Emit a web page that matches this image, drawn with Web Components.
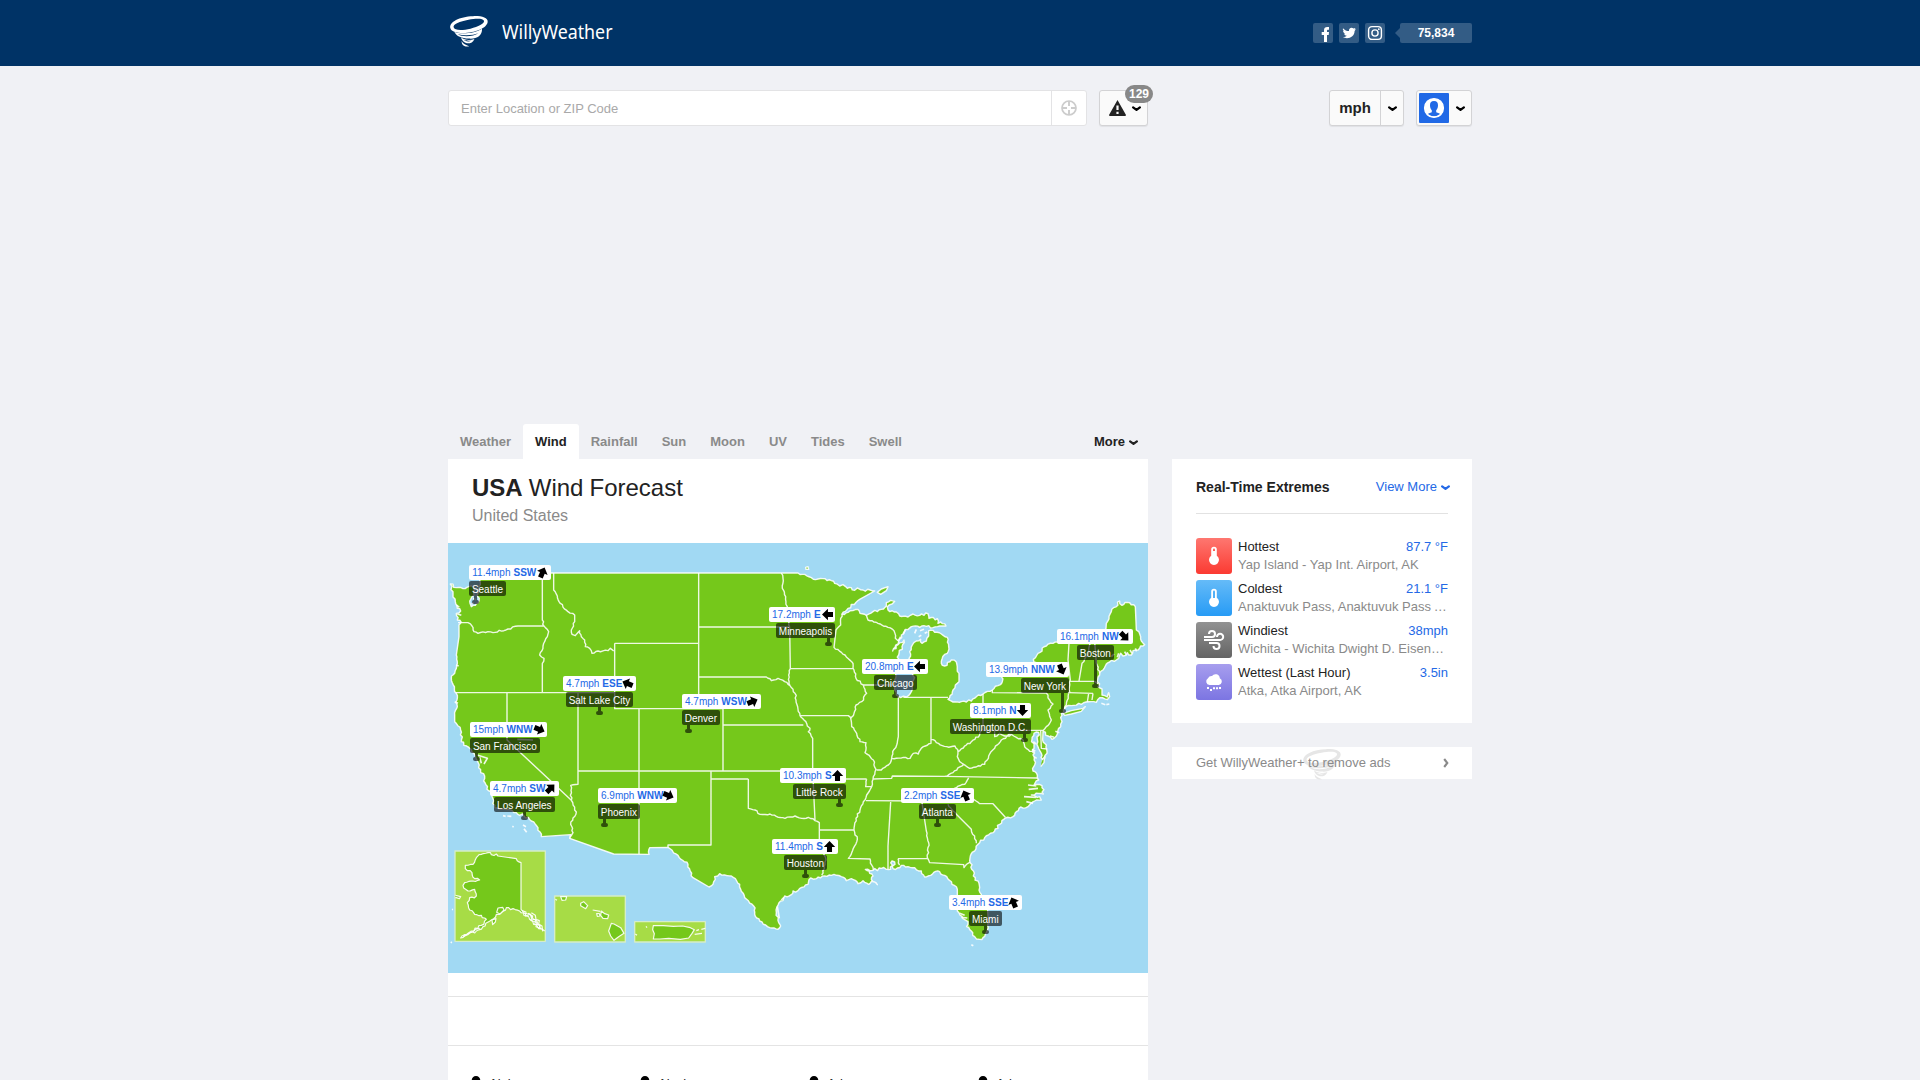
<!DOCTYPE html>
<html lang="en">
<head>
<meta charset="utf-8">
<title>USA Wind Forecast - WillyWeather</title>
<style>
html{height:100%;overflow:hidden}
body{margin:0;height:1080px;overflow:hidden;background:#f0f1f5;font-family:"Liberation Sans",Arial,sans-serif;font-size:13px;color:#222}
</style>
</head>
<body>
<weather-page></weather-page>
<script>
const define = (name, build) => customElements.define(name, class extends HTMLElement {
  connectedCallback() {
    if (this.shadowRoot) return;
    const root = this.attachShadow({ mode: 'open' });
    root.innerHTML = build(this);
  }
});
const at = (el, n) => el.getAttribute(n) || '';

/* ---------- icons ---------- */
const TORNADO = `<path fill-rule="evenodd" d="M1 36C-3 18 28 1 70 0C96-1 115 5 114 17C113 36 75 51 40 51C18 51 3 46 1 36ZM11 34C13 44 38 44 62 38C86 32 104 23 103 15C101 6 78 7 56 11C30 16 8 24 11 34Z"/>
<path d="M13 47C30 56 75 53 97 38C98 60 80 70 57 68C36 67 19 61 13 47ZM23 55C35 63 70 64 86 51C72 58 45 60 23 55Z" fill-rule="evenodd"/>
<path d="M33 64C45 74 62 74 74 69C70 80 60 83 51 82C42 80 36 74 33 64ZM40 71C48 78 58 78 65 74C57 75 48 75 40 71Z" fill-rule="evenodd"/>
<path d="M35 75C40 84 48 87 58 91C47 95 35 89 35 75Z"/>`;
const ICONS = {
  tornado: ['0 0 115 93', TORNADO],
  chevron: ['0 0 9 6', '<path d="M1.1 1.4L4.5 3.9L7.9 1.4" fill="none" stroke="currentColor" stroke-width="2.3" stroke-linecap="round" stroke-linejoin="round"/>'],
  facebook: ['0 0 20 20', '<path d="M11 19V12H8.7V9H11V7.4C11 5 12.3 4 14.2 4H16V6.8H15C14.2 6.8 14 7.2 14 8V9H16L15.7 12H14V19Z"/>'],
  twitter: ['0 0 20 20', '<path d="M4 5.2C5.8 7.2 7.6 8 10 8.1C9.4 5 12.8 3.8 14.5 5.6L16.5 4.9L15.6 6.6L16.9 6.3L15.6 8C15.6 13.8 9 17 3.8 14.1C5.5 14.2 6.8 13.7 7.8 12.8C6.4 12.7 5.5 11.9 5.1 10.8H6.3C4.9 10.3 4.1 9.2 4.1 7.8L5.3 8.2C4 7.3 3.6 6.5 4 5.2Z"/>'],
  instagram: ['0 0 20 20', '<rect x="3.6" y="3.6" width="12.8" height="12.8" rx="3.4" fill="none" stroke="currentColor" stroke-width="1.4"/><circle cx="10" cy="10" r="3.1" fill="none" stroke="currentColor" stroke-width="1.4"/><circle cx="13.8" cy="6.2" r=".9"/>'],
  target: ['0 0 16 16', '<circle cx="8" cy="8" r="7" fill="none" stroke="currentColor" stroke-width="1.7"/><path d="M8 1V6M8 10V15M1 8H6M10 8H15" stroke="currentColor" stroke-width="1.9"/>'],
  alert: ['0 0 17 16', '<path fill-rule="evenodd" d="M8.5 0L17 15Q17 16 16 16H1Q0 16 0 15ZM7.4 5.5V10H9.6V5.5ZM7.4 11.7V13.9H9.6V11.7Z"/>'],
  user: ['0 0 30 30', '<rect width="30" height="30" rx="1" fill="#2169e6"/><circle cx="15" cy="15" r="9.3" fill="none" stroke="#fff" stroke-width="1.6"/><path fill="#fff" fill-rule="evenodd" d="M5.5 15A9.5 9.5 0 0 1 24.5 15A9.5 9.5 0 0 1 5.5 15ZM15 8C12 8 10.8 10 11 12.8C11.1 15.2 12 16.2 12.8 17.3V19.3C11 20 9 20.4 8.6 21.3C12 24 18 24 21.4 21.3C21 20.4 19 20 17.2 19.3V17.3C18 16.2 18.9 15.2 19 12.8C19.2 10 18 8 15 8Z"/>'],
  hot: ['0 0 36 36', '<path d="M15.2 11.6a2.8 2.8 0 0 1 5.6 0V17.8a5 5 0 1 1-5.6 0Z"/><path d="M17 11.6a1 1 0 0 1 2 0V13H17Z" fill="#fd5f58"/>'],
  cold: ['0 0 36 36', '<path d="M15.2 11.6a2.8 2.8 0 0 1 5.6 0V17.8a5 5 0 1 1-5.6 0Z"/><path d="M17 11.6a1 1 0 0 1 2 0V18H17Z" fill="#50b0f7"/>'],
  wind: ['0 0 36 36', '<g fill="none" stroke="#fff" stroke-width="2"><path d="M8 15H16A3 3 0 1 0 13 12"/><path d="M8 18H24A3.1 3.1 0 1 0 21 15"/><path d="M13 21H20.5A3 3 0 1 1 17.5 24"/></g>'],
  rain: ['0 0 36 36', '<path d="M13.5 21A3.6 3.6 0 0 1 12 14.3A4 4 0 0 1 16 12A4.3 4.3 0 0 1 23.8 14.2A3.6 3.6 0 0 1 22.8 21Z"/><path d="M11 23h2v2h-2zM14 25h2v2h-2zM17 23.3h2v2h-2zM20 23.3h2v2h-2zM23 23h2v2h-2z"/>'],
  more: ['0 0 6 10', '<path d="M1.2 1L4.3 5L1.2 9" fill="none" stroke="currentColor" stroke-width="2.1"/>'],
  pin: ['0 0 10 14', '<path d="M5 0C7.6 0 9.3 1.9 9.3 4.3C9.3 7.3 6.4 9.8 5 14C3.6 9.8.7 7.3.7 4.3C.7 1.9 2.4 0 5 0Z"/>'],
  arrow: ['0 0 10 10', '<path d="M5 0L10.2 5.4H7.3V10H2.7V5.4H-.2Z"/>']
};
define('ww-icon', el => {
  const [box, body] = ICONS[at(el, 'name')];
  return `<style>:host{display:inline-block;flex:none}svg{display:block;width:100%;height:100%;fill:currentColor;overflow:visible}</style><svg viewBox="${box}">${body}</svg>`;
});

/* ---------- header ---------- */
define('site-header', () => `<style>
:host{display:block;height:66px;background:#036;color:#fff}
.in{width:1024px;height:66px;margin:0 auto;display:flex;align-items:center}
.logo{width:38px;height:31px;margin:-3px 0 0 2px}
svg{width:116px;height:30px;margin:-2px 0 0 14px;display:block}
.soc{display:flex;gap:6px;margin-left:auto}
.soc ww-icon{width:20px;height:20px;background:#335c85;border-radius:2px}
.tail{width:0;height:0;border:5px solid transparent;border-right-color:#335c85;margin-left:5px}
.count{width:72px;height:20px;background:#335c85;border-radius:2px;font:bold 12px/20px "Liberation Sans",sans-serif;text-align:center}
</style><div class="in"><ww-icon class="logo" name="tornado"></ww-icon>
<svg viewBox="0 0 116 30"><text x="0" y="22" font-family="Noto Sans,sans-serif" font-size="20.5" fill="#fff" textLength="110.5" lengthAdjust="spacingAndGlyphs">WillyWeather</text></svg>
<div class="soc"><ww-icon name="facebook"></ww-icon><ww-icon name="twitter"></ww-icon><ww-icon name="instagram"></ww-icon></div>
<div class="tail"></div><div class="count">75,834</div></div>`);

define('tool-bar', () => `<style>
:host{display:flex;height:36px}
.search,.btn{box-sizing:border-box;height:36px;display:flex;align-items:center;border-radius:3px}
.search{width:639px;border:1px solid #e3e3e5;background:#fff;color:#a9a9a9;line-height:34px}
.search span{flex:1;padding:1px 0 0 12px}
.loc{width:34px;height:34px;border-left:1px solid #e3e3e5;display:flex;align-items:center;justify-content:center;color:#ccc}
.loc ww-icon{width:16px;height:16px}
.btn{background:#fafafa;border:1px solid #d3d3d5;box-shadow:0 1px 1px #0001;position:relative}
.chev{width:9px;height:6px;color:#000}
.alert{width:49px;margin-left:12px;padding-left:9px;gap:6px}
.alert .chev{margin-top:1px}
.alert>.tri{width:17px;height:16px;margin-top:0}
.badge{position:absolute;left:25px;top:-6px;width:28px;height:18px;border-radius:9px;background:#888;color:#fff;font:bold 12px/18px "Liberation Sans";text-align:center}
.unit{width:75px;margin-left:auto;font-weight:bold;font-size:15px}
.unit b{width:50px;text-align:center;border-right:1px solid #d3d3d5;line-height:34px;height:34px}
.unit .chev{margin:1px 0 0 6.5px}
.user{width:56px;margin-left:12px;padding-left:2px}
.user .av{width:30px;height:30px}.user .chev{margin:1px 0 0 6.5px}
</style>
<div class="search"><span>Enter Location or ZIP Code</span><div class="loc"><ww-icon name="target"></ww-icon></div></div>
<div class="btn alert"><ww-icon class="tri" name="alert"></ww-icon><ww-icon class="chev" name="chevron"></ww-icon><div class="badge">129</div></div>
<div class="btn unit"><b>mph</b><ww-icon class="chev" name="chevron"></ww-icon></div>
<div class="btn user"><ww-icon class="av" name="user"></ww-icon><ww-icon class="chev" name="chevron"></ww-icon></div>`);

define('tab-item', () => `<style>
:host{display:block;height:35px;padding:0 12px;font-weight:bold;line-height:35px;color:#8a8a8a;border-radius:3px 3px 0 0}
:host([active]){background:#fff;color:#222}</style><slot></slot>`);
define('tab-bar', () => `<style>
:host{display:flex;height:35px}
.more{margin-left:auto;margin-right:10px;font-weight:bold;line-height:35px;display:flex;align-items:center;gap:4px}
ww-icon{width:9px;height:6px;margin-top:2px}</style><slot></slot><div class="more">More<ww-icon name="chevron"></ww-icon></div>`);

/* ---------- map: coordinates are in thirds of a pixel, origin top-left ---------- */
const COAST = `7,132 25,143 45,146 62,140 80,136 78,165 71,172 66,190 70,200 82,196 93,182 90,160 93,140 95,120 92,99 1050,99 1070,103 1090,113 1110,117 1125,116 1150,122 1160,130 1175,138 1185,134 1198,145 1210,143 1220,151 1228,144 1245,150 1280,153 1235,178 1200,205 1182,222 1200,217 1230,208 1236,220 1255,226 1275,215 1300,208 1315,198 1315,188 1328,181 1340,184 1332,192 1318,200 1320,210 1345,216 1355,228 1380,231 1395,222 1415,226 1440,221 1443,235 1468,236 1470,250 1478,246 1494,258 1475,258 1455,263 1435,259 1415,262 1390,260 1372,268 1360,285 1352,305 1334,333 1350,314 1368,300 1362,320 1352,345 1347,380 1340,420 1340,450 1345,465 1358,473 1375,471 1390,455 1397,420 1395,390 1383,355 1385,335 1393,315 1405,303 1418,298 1422,310 1435,303 1442,288 1442,272 1455,271 1480,282 1498,292 1502,320 1498,340 1482,358 1480,370 1490,378 1510,360 1525,366 1533,400 1533,425 1522,435 1515,450 1505,473 1500,478 1515,486 1540,485 1570,483 1585,470 1605,462 1633,450 1650,437 1663,425 1660,410 1672,398 1750,385 1765,368 1756,358 1770,340 1795,318 1815,310 1840,309 1920,309 1955,300 1974,265 1975,250 1990,215 2015,183 2022,196 2038,187 2062,200 2065,270 2078,290 2080,303 2090,314 2075,325 2055,332 2050,345 2038,338 2025,348 2018,340 2005,360 1985,366 1972,378 1965,390 1955,405 1948,425 1955,432 1950,440 1962,447 1962,465 1978,471 1982,458 1985,470 1978,479 1955,473 1945,487 1930,485 1900,493 1870,497 1850,505 1840,520 1842,545 1838,560 1828,582 1812,598 1800,588 1785,574 1784,600 1795,615 1797,640 1790,655 1782,665 1780,640 1770,620 1768,598 1772,577 1758,580 1752,598 1758,625 1755,645 1760,675 1755,693 1768,705 1768,714 1772,720 1758,735 1782,737 1786,762 1772,760 1750,765 1775,770 1780,780 1760,783 1740,800 1718,801 1705,815 1695,830 1672,834 1655,853 1635,878 1610,893 1590,913 1580,933 1567,948 1571,988 1582,1013 1595,1043 1600,1063 1618,1098 1621,1148 1615,1178 1605,1193 1595,1198 1580,1190 1570,1173 1556,1160 1560,1145 1545,1136 1528,1113 1528,1088 1528,1048 1512,1033 1490,1006 1475,995 1463,994 1448,1006 1430,1011 1420,993 1400,983 1380,980 1360,976 1348,984 1335,986 1340,966 1332,963 1328,988 1300,985 1275,991 1252,988 1265,1000 1275,1008 1270,1018 1288,1034 1270,1024 1262,1033 1245,1022 1230,1031 1210,1016 1195,1022 1180,1010 1150,1006 1130,1008 1105,1016 1088,1014 1080,1033 1050,1052 1035,1053 1030,1064 1010,1068 1005,1082 993,1088 985,1118 992,1148 998,1158 990,1168 965,1163 935,1143 920,1123 917,1098 890,1073 875,1033 850,1008 815,1001 800,1010 795,1033 783,1041 735,1013 720,973 690,946 660,922 605,923 603,943 497,942 365,895 368,884 280,890 270,863 250,843 228,828 205,818 170,808 140,803 130,763 107,723 110,708 92,683 84,655 78,640 65,625 40,605 38,570 20,545 20,525 28,500 25,460 10,415 20,400 28,370 25,345 33,290 33,255 40,247 28,240 25,220 38,213 28,205 22,185 15,155`;
const RIVERS = [
'30,248 60,248 72,258 78,275 90,280 120,275 135,278 180,267 210,258 288,258',
'283,99 283,240 288,258 302,275 298,290 285,318 275,345 288,355 283,370 283,458',
'317,99 317,150 328,168 333,185 360,215 380,225 380,245 370,270 372,283 382,287 395,272 400,290 410,300 412,320 425,325 432,340 450,333 480,332 487,325 497,333',
'752,411 955,411 970,422 990,415 1010,425 1026,437 1041,460 1049,500 1056,527 1068,540 1078,558 1086,565 1081,575 1094,595 1094,692 1101,840',
'1000,99 1005,115 1003,145 1013,170 1018,215 1025,261 1027,386 1022,405 1026,437',
'1182,222 1178,255 1164,270 1158,322 1191,345 1211,365 1218,390 1224,415 1246,435 1256,460 1241,485 1224,495 1218,520 1208,535 1211,560 1226,580 1236,605 1254,608 1251,638 1276,660 1284,688 1276,710 1271,740 1256,765 1246,785 1236,810 1224,835 1218,870 1228,898 1216,925 1201,955 1266,957 1271,975 1276,990',
'901,717 901,805 921,810 936,823 966,822 991,832 1011,835 1041,828 1061,835 1081,832 1101,842 1114,848 1114,910 1126,930 1134,960 1121,1005',
'1351,472 1351,590 1346,615 1334,635 1331,655 1321,675 1300,690 1286,690',
'1331,655 1366,652 1386,655 1396,640 1411,642 1426,620 1449,610 1449,598 1471,610 1496,620 1521,618 1530,635 1528,650 1535,665 1547,673 1565,685 1610,673 1622,648 1640,625 1660,600 1690,583',
'1490,710 1515,698 1547,673','1605,462 1605,560 1595,585 1570,605 1555,615 1530,635',
'1562,714 1550,733 1525,743 1505,758','1255,226 1260,240 1290,250 1320,262 1338,272 1342,295 1350,302',
'1640,571 1640,590 1655,580 1670,588 1690,583 1705,592 1725,600 1730,620 1757,640',
'1633,450 1633,458 1795,459 1805,480 1815,492 1800,510 1810,540 1795,560 1785,572',
'1863,310 1860,360 1867,420 1865,455 1855,495 1845,512','1926,310 1920,345 1902,370 1893,423','1940,305 1945,370 1955,400',
'1422,788 1435,873 1442,908 1438,953 1445,968 1547,974 1548,983 1567,966','1350,956 1438,956','1350,956 1355,975',
'390,458 390,733 368,736 370,781 385,816 368,853 375,878 365,893','1500,793 1525,823 1570,868 1585,910','1577,778 1595,791 1635,791 1672,832','1256,717 1253,740 1271,740'];
const LINES = `M22 458H500M500 310V506H825V693M500 310H752M752 99V506M752 261H1025M1027 386H1215M825 555H1066M1056 527H1201L1211 535M573 506V942M390 693H1094M789 693V915H660V922M789 717H901M177 458V600L228 648L370 781M1094 717H1256M1114 870H1218M1246 435H1340M1449 472V598M1366 472H1500M1276 717L1331 715L1333 708L1490 709L1768 714M1254 782L1422 783M1328 786L1320 918V988M1605 571H1785M1778 571L1780 625L1798 627M1867 424H1940L1950 432M1860 458L1935 460M1922 460L1918 486M1935 460L1932 480`;
const parse = s => s.trim().split(/\s+/).map(p => p.split(',').map(Number));
let seed = 7;
const rnd = () => (seed = (seed * 16807) % 2147483647) / 2147483647 - .5;
function rough(str, amp, close) {
  const p = parse(str); let d = 'M' + p[0];
  const n = close ? p.length : p.length - 1;
  for (let i = 0; i < n; i++) {
    const a = p[i], b = p[(i + 1) % p.length], dx = b[0] - a[0], dy = b[1] - a[1], len = Math.hypot(dx, dy);
    if (len > 11 && len < 48 && Math.abs(dx) > 1.5 && Math.abs(dy) > .8) {
      const k = Math.round(len / 7);
      for (let j = 1; j < k; j++) { const o = rnd() * amp; d += 'L' + (a[0] + dx * j / k - dy / len * o).toFixed(1) + ' ' + (a[1] + dy * j / k + dx / len * o).toFixed(1); }
    }
    d += 'L' + b[0] + ' ' + b[1];
  }
  return d + (close ? 'Z' : '');
}
const ALASKA = '120,938 130,944 145,942 150,948 205,956 219,968 219,1108 230,1120 245,1122 262,1140 275,1158 289,1172 272,1166 255,1146 235,1128 215,1113 195,1106 175,1103 160,1118 145,1123 130,1140 105,1160 85,1173 55,1186 38,1194 70,1173 100,1156 115,1138 100,1126 80,1123 65,1110 58,1088 65,1073 85,1068 80,1048 60,1053 45,1036 50,1028 75,1023 95,1020 80,1016 72,998 52,986 52,976 75,973 85,953 100,943';
define('wind-map', () => `<style>
:host{display:block;position:relative;width:700px;height:430px;background:#a1d9f3;overflow:hidden}
svg{display:block;width:700px;height:430px}</style>
<svg viewBox="0 9 2100 1290" stroke-linejoin="round">
<g fill="#75c81b" stroke="#fff" stroke-opacity=".88" stroke-width="4.2">
<path d="${rough(COAST, 8, true)}"/>
<path d="M1288 157L1300 147L1320 140L1315 152L1298 163ZM1073 82L1080 80L1082 88L1074 88ZM1845 520L1870 512L1905 505L1912 500L1900 514L1870 522L1850 526ZM1782 660L1790 650L1788 668L1778 680"/>
<path fill="none" d="${RIVERS.map(r => rough(r, 5)).join('')}${LINES}"/>
<path fill="none" stroke-width="5" d="M1358 290L1350 304M1365 282L1372 270M1405 268L1400 280M1416 272L1428 268M1430 280L1438 276M1412 290L1420 286M1960 490L1972 494M1975 494L1984 492M165 827L173 829M178 828L190 829M193 859L197 861M225 855L234 860M228 866L236 877M1570 1214L1576 1217M12 1108L15 1109M8 1206L12 1208M25 195L34 202M28 222L40 226M24 375L32 378M20 485L30 490M78 188L70 193M88 645L118 655L108 672M95 652L100 670M75 175L85 180M208 598L255 600"/>
<path fill="none" stroke-width="5" d="M1740 735L1765 738M1742 748L1770 745M1728 770L1765 772M1735 785L1755 790M1990 350L1998 342M2008 352L2012 340M2030 335L2035 345M2046 330L2052 340M2062 325L2066 334M1756 605L1764 612M1752 628L1762 634M1758 650L1766 655M1806 588L1818 592M1822 574L1834 578M1540 1132L1558 1134M1535 1120L1550 1126M988 1100L994 1135M1000 1080L1008 1072"/>
</g>
<g fill="#a7dc46" stroke="#d5edc8" stroke-width="4"><path d="M21 933H292V1204H21ZM320 1068H532V1206H320ZM560 1145H772V1206H560Z"/></g>
<g fill="#75c81b" stroke="#fff" stroke-opacity=".9" stroke-width="3.6">
<path d="${rough(ALASKA, 8, true)}"/>
<path d="M150 1104l14 -2l4 8l-12 12l-10 -5ZM132 1140l12 -4l-2 10l-8 8ZM22 1066l16 4l-4 6l-12 -4M338 1070h18l-3 10l-11 1ZM322 1078l5 3M398 1090l9-5l12 12l-6 9l-15-9ZM434 1110l23 4M446 1121h8l2 7l-8 1ZM460 1113l10 8l12 4l-3 11l-14-1l-7-9ZM490 1150l8 2l20 11l10 17l-16 10l-14 11l-10-13l-6-15ZM616 1157l30 0l30 2l28-1l23 5l12 6l-7 11l-10 14l-25 4l-35-3l-26 2l-20 0l3-16l-5-12ZM740 1183l22-3M745 1172l8-3M760 1168l12-3M562 1182l5 4M594 1159l3 4"/>
<path fill="none" d="M222 1112l12 4l-2 12l16-5l2 14l14 3l-4 12l16 3l-3 12M240 1120l14 8l-6 12l18 8l-2 12l15 7M250 1118l12 8l2 12l10 4l-2 10l10 6l2 16M48 1190l12-10l14-4M75 1176l8-8l14-4"/></g>
</svg><slot></slot>`);

const DIR = ['N','NNE','NE','ENE','E','ESE','SE','SSE','S','SSW','SW','WSW','W','WNW','NW','NNW'];
define('map-marker', el => {
  const [x1, x2, y, n1, n2, px, py] = at(el, 'place').split(',').map(Number);
  const dir = at(el, 'dir'), w = Math.min(x1, n1);
  const px3 = v => (v / 3).toFixed(1) + 'px';
  return `<style>
:host{position:absolute;left:${px3(w)};top:${px3(y - 9)};font-size:10px;line-height:15px;white-space:nowrap}
.v{box-sizing:border-box;margin-left:${px3(x1 - w)};width:${px3(x2 - x1)};height:15px;padding:0 2.5px 0 3px;background:#fff;color:#2469e6;border-radius:2px;display:flex;align-items:center}
.v b{margin-left:3px}.v ww-icon{width:11px;height:11px;margin-left:auto;color:#000;transform:rotate(${DIR.indexOf(dir) * 22.5 + 180}deg)}
.n{box-sizing:border-box;margin:1px 0 0 ${px3(n1 - w)};width:${px3(n2 - n1)};height:15px;line-height:15px;border-radius:2px;background:#0009;color:#fff;text-align:center}
.n span{display:block;padding-top:.5px}
.s{width:3px;height:${px3(py - y - 103)};background:#0009;margin-left:${px3(px - w - 4.5)}}
.f{width:7px;height:4px;border-radius:2px;background:#0009;margin-left:${px3(px - w - 10.5)}}
</style><div class="v"><span>${at(el, 'speed')}</span><b>${dir}</b><ww-icon name="arrow"></ww-icon></div><div class="n"><span><slot></slot></span></div><div class="s"></div><div class="f"></div>`;
});

/* ---------- panels ---------- */
define('forecast-title', () => `<style>:host{display:block;height:84px;box-sizing:border-box;padding:15px 24px 0}
h1{margin:0;font-size:24px;line-height:28px;font-weight:normal;word-spacing:-.6px}p{margin:4px 0 0;font-size:16px;line-height:20px;color:#8a8a8a}</style>
<h1><slot name="heading"></slot></h1><p><slot></slot></p>`);
define('state-link', () => `<style>:host{display:flex;width:169px;align-items:flex-start}ww-icon{width:10px;height:14px;color:#000;margin-right:8px}span{line-height:16px}</style><ww-icon name="pin"></ww-icon><span><slot></slot></span>`);
define('forecast-card', () => `<style>:host{display:block;width:700px;height:621px;background:#fff;overflow:hidden}
.r{height:23px;border-bottom:1px solid #e4e4e4}.q{height:48px;border-bottom:1px solid #e4e4e4}
.states{display:flex;padding:30px 0 0 23px;height:20px}</style>
<slot name="top"></slot><slot name="map"></slot><div class="r"></div><div class="q"></div><div class="states"><slot></slot></div>`);
define('extreme-row', el => `<style>:host{display:flex;height:36px;margin-bottom:6px}
ww-icon{width:36px;height:36px;border-radius:3px;color:#fff;background:linear-gradient(${at(el, 'tones')})}
.t{width:210px;margin-left:6px;line-height:18px}.t>div{display:flex;justify-content:space-between;height:18px}
.t b{font-weight:normal;color:#2469e6}p{margin:0;color:#8a8a8a;white-space:nowrap;overflow:hidden;text-overflow:ellipsis}</style>
<ww-icon name="${at(el, 'icon')}"></ww-icon><div class="t"><div><span>${at(el, 'label')}</span><b>${at(el, 'value')}</b></div><p><slot></slot></p></div>`);
define('extremes-card', () => `<style>:host{display:block;box-sizing:border-box;width:300px;height:264px;background:#fff;padding:0 24px}
header{display:flex;height:54px;border-bottom:1px solid #e2e2e2;margin-bottom:24px;line-height:56px}
h2{margin:0;font-size:14px;flex:1}a{color:#2469e6;display:flex;align-items:center;gap:4px;margin:2px -2px 0 0}ww-icon{width:9px;height:6px;margin-top:2px}</style>
<header><h2>Real-Time Extremes</h2><a>View More<ww-icon name="chevron"></ww-icon></a></header><slot></slot>`);
define('promo-bar', () => `<style>:host{display:flex;position:relative;box-sizing:border-box;width:300px;height:32px;margin-top:24px;padding:0 23px 0 24px;background:#fff;color:#8a8a8a;align-items:center;justify-content:space-between}
.t{position:absolute;left:131px;top:2px;width:38px;height:31px;color:#e6e6e6}.m{width:6px;height:10px}span{position:relative;margin-top:-1px}</style>
<ww-icon class="t" name="tornado"></ww-icon><span><slot></slot></span><ww-icon class="m" name="more"></ww-icon>`);

define('weather-page', () => `<style>
:host{display:block}.wrap{width:1024px;margin:0 auto;padding-top:24px}
tab-bar{width:700px;margin-top:298px}.cols{display:flex;gap:24px}</style>
<site-header></site-header>
<div class="wrap"><tool-bar></tool-bar>
<tab-bar><tab-item>Weather</tab-item><tab-item active>Wind</tab-item><tab-item>Rainfall</tab-item><tab-item>Sun</tab-item><tab-item>Moon</tab-item><tab-item>UV</tab-item><tab-item>Tides</tab-item><tab-item>Swell</tab-item></tab-bar>
<div class="cols"><forecast-card>
<forecast-title slot="top"><span slot="heading"><b>USA</b> Wind Forecast</span>United States</forecast-title>
<wind-map slot="map">
<map-marker speed="11.4mph" dir="SSW" place="64,308,75,64,173,83,190">Seattle</map-marker>
<map-marker speed="4.7mph" dir="ESE" place="345,563,408,354,555,454,523">Salt Lake City</map-marker>
<map-marker speed="4.7mph" dir="WSW" place="702,938,462,702,815,721,577">Denver</map-marker>
<map-marker speed="15mph" dir="WNW" place="66,297,546,66,275,85,661">San Francisco</map-marker>
<map-marker speed="4.7mph" dir="SW" place="126,332,723,138,320,229,838">Los Angeles</map-marker>
<map-marker speed="6.9mph" dir="WNW" place="450,686,744,450,575,469,860">Phoenix</map-marker>
<map-marker speed="17.2mph" dir="E" place="963,1161,201,984,1161,1141,317">Minneapolis</map-marker>
<map-marker speed="20.8mph" dir="E" place="1242,1439,357,1278,1406,1341,472">Chicago</map-marker>
<map-marker speed="16.1mph" dir="NW" place="1827,2054,267,1887,1997,1942,442">Boston</map-marker>
<map-marker speed="13.9mph" dir="NNW" place="1614,1863,366,1719,1862,1844,518">New York</map-marker>
<map-marker speed="8.1mph" dir="N" place="1566,1748,489,1506,1748,1730,605">Washington D.C.</map-marker>
<map-marker speed="10.3mph" dir="S" place="996,1193,684,1035,1193,1174,800">Little Rock</map-marker>
<map-marker speed="2.2mph" dir="SSE" place="1359,1577,744,1413,1523,1468,860">Atlanta</map-marker>
<map-marker speed="11.4mph" dir="S" place="972,1169,897,1008,1136,1072,1013">Houston</map-marker>
<map-marker speed="3.4mph" dir="SSE" place="1503,1721,1065,1563,1661,1612,1181">Miami</map-marker>
</wind-map>
<state-link>Alabama</state-link><state-link>Alaska</state-link><state-link>Arizona</state-link><state-link>Arkansas</state-link>
</forecast-card>
<div><extremes-card>
<extreme-row icon="hot" tones="#fe7770,#fb3a32" label="Hottest" value="87.7 °F">Yap Island - Yap Int. Airport, AK</extreme-row>
<extreme-row icon="cold" tones="#65bbf8,#279bf5" label="Coldest" value="21.1 °F">Anaktuvuk Pass, Anaktuvuk Pass Airport, AK</extreme-row>
<extreme-row icon="wind" tones="#929292,#646464" label="Windiest" value="38mph">Wichita - Wichita Dwight D. Eisenhower National Airport, KS</extreme-row>
<extreme-row icon="rain" tones="#a79eee,#7c75e2" label="Wettest (Last Hour)" value="3.5in">Atka, Atka Airport, AK</extreme-row>
</extremes-card><promo-bar>Get WillyWeather+ to remove ads</promo-bar></div></div></div>`);
</script>
</body>
</html>
